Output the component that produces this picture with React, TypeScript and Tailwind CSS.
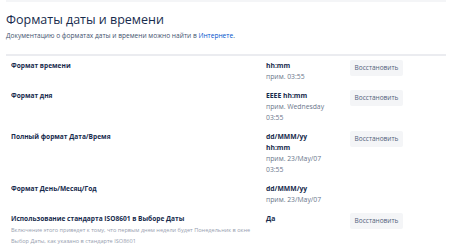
export default function App() {
  const rows = [
    { label: 'Формат времени', value: ['hh:mm'], example: ['прим. 03:55'], reset: true },
    { label: 'Формат дня', value: ['EEEE hh:mm'], example: ['прим. Wednesday', '03:55'], reset: true },
    { label: 'Полный формат Дата/Время', value: ['dd/MMM/yy', 'hh:mm'], example: ['прим. 23/May/07', '03:55'], reset: true },
    { label: 'Формат День/Месяц/Год', value: ['dd/MMM/yy'], example: ['прим. 23/May/07'], reset: false },
  ];

  return (
    <div className="w-[452px] h-[252px] overflow-hidden bg-white px-[6px] font-['Open_Sans',sans-serif] text-[#172b4d]">
      <div className="h-[2px] bg-[#f4f5f7]" />
      <h1 className="mt-[9px] text-[12.5px] leading-[18px] font-medium">Форматы даты и времени</h1>
      <p className="mt-[2px] text-[6.6px] leading-[10px] text-[#42526e]">
        Документацию о форматах даты и времени можно найти в{' '}
        <span className="text-[#0052cc]">Интернете</span>.
      </p>
      <div className="mt-[13px] h-[2px] bg-[#ebecf0]" />

      <div className="flex flex-col pt-[3px]">
        {rows.map((r) => (
          <div key={r.label} className="flex items-start pl-[5px] pb-[7px] pt-[1px]">
            <div className="w-[255px] text-[6.6px] leading-[11px] font-bold">{r.label}</div>
            <div className="w-[84px] text-[6.8px] leading-[11px]">
              {r.value.map((v) => (
                <div key={v} className="font-bold">{v}</div>
              ))}
              {r.example.map((e) => (
                <div key={e} className="text-[#6b778c]">{e}</div>
              ))}
            </div>
            {r.reset && (
              <button className="h-[16px] w-[53px] rounded-[2px] bg-[#f4f5f7] text-[6.5px] text-[#505f79]">
                Восстановить
              </button>
            )}
          </div>
        ))}

        <div className="flex items-start pl-[5px] pt-[1px]">
          <div className="w-[255px]">
            <div className="text-[6.6px] leading-[11px] font-bold">
              Использование стандарта ISO8601 в Выборе Даты
            </div>
            <div className="mt-[1px] text-[5.6px] leading-[11px] text-[#97a0af] w-[250px]">
              Включение этого приведет к тому, что первым днем недели будет Понедельник в окне Выбор Даты, как указано в стандарте ISO8601
            </div>
          </div>
          <div className="w-[84px] text-[6.8px] leading-[11px] font-bold">Да</div>
          <button className="h-[16px] w-[53px] rounded-[2px] bg-[#f4f5f7] text-[6.5px] text-[#505f79]">
            Восстановить
          </button>
        </div>
      </div>
    </div>
  );
}
